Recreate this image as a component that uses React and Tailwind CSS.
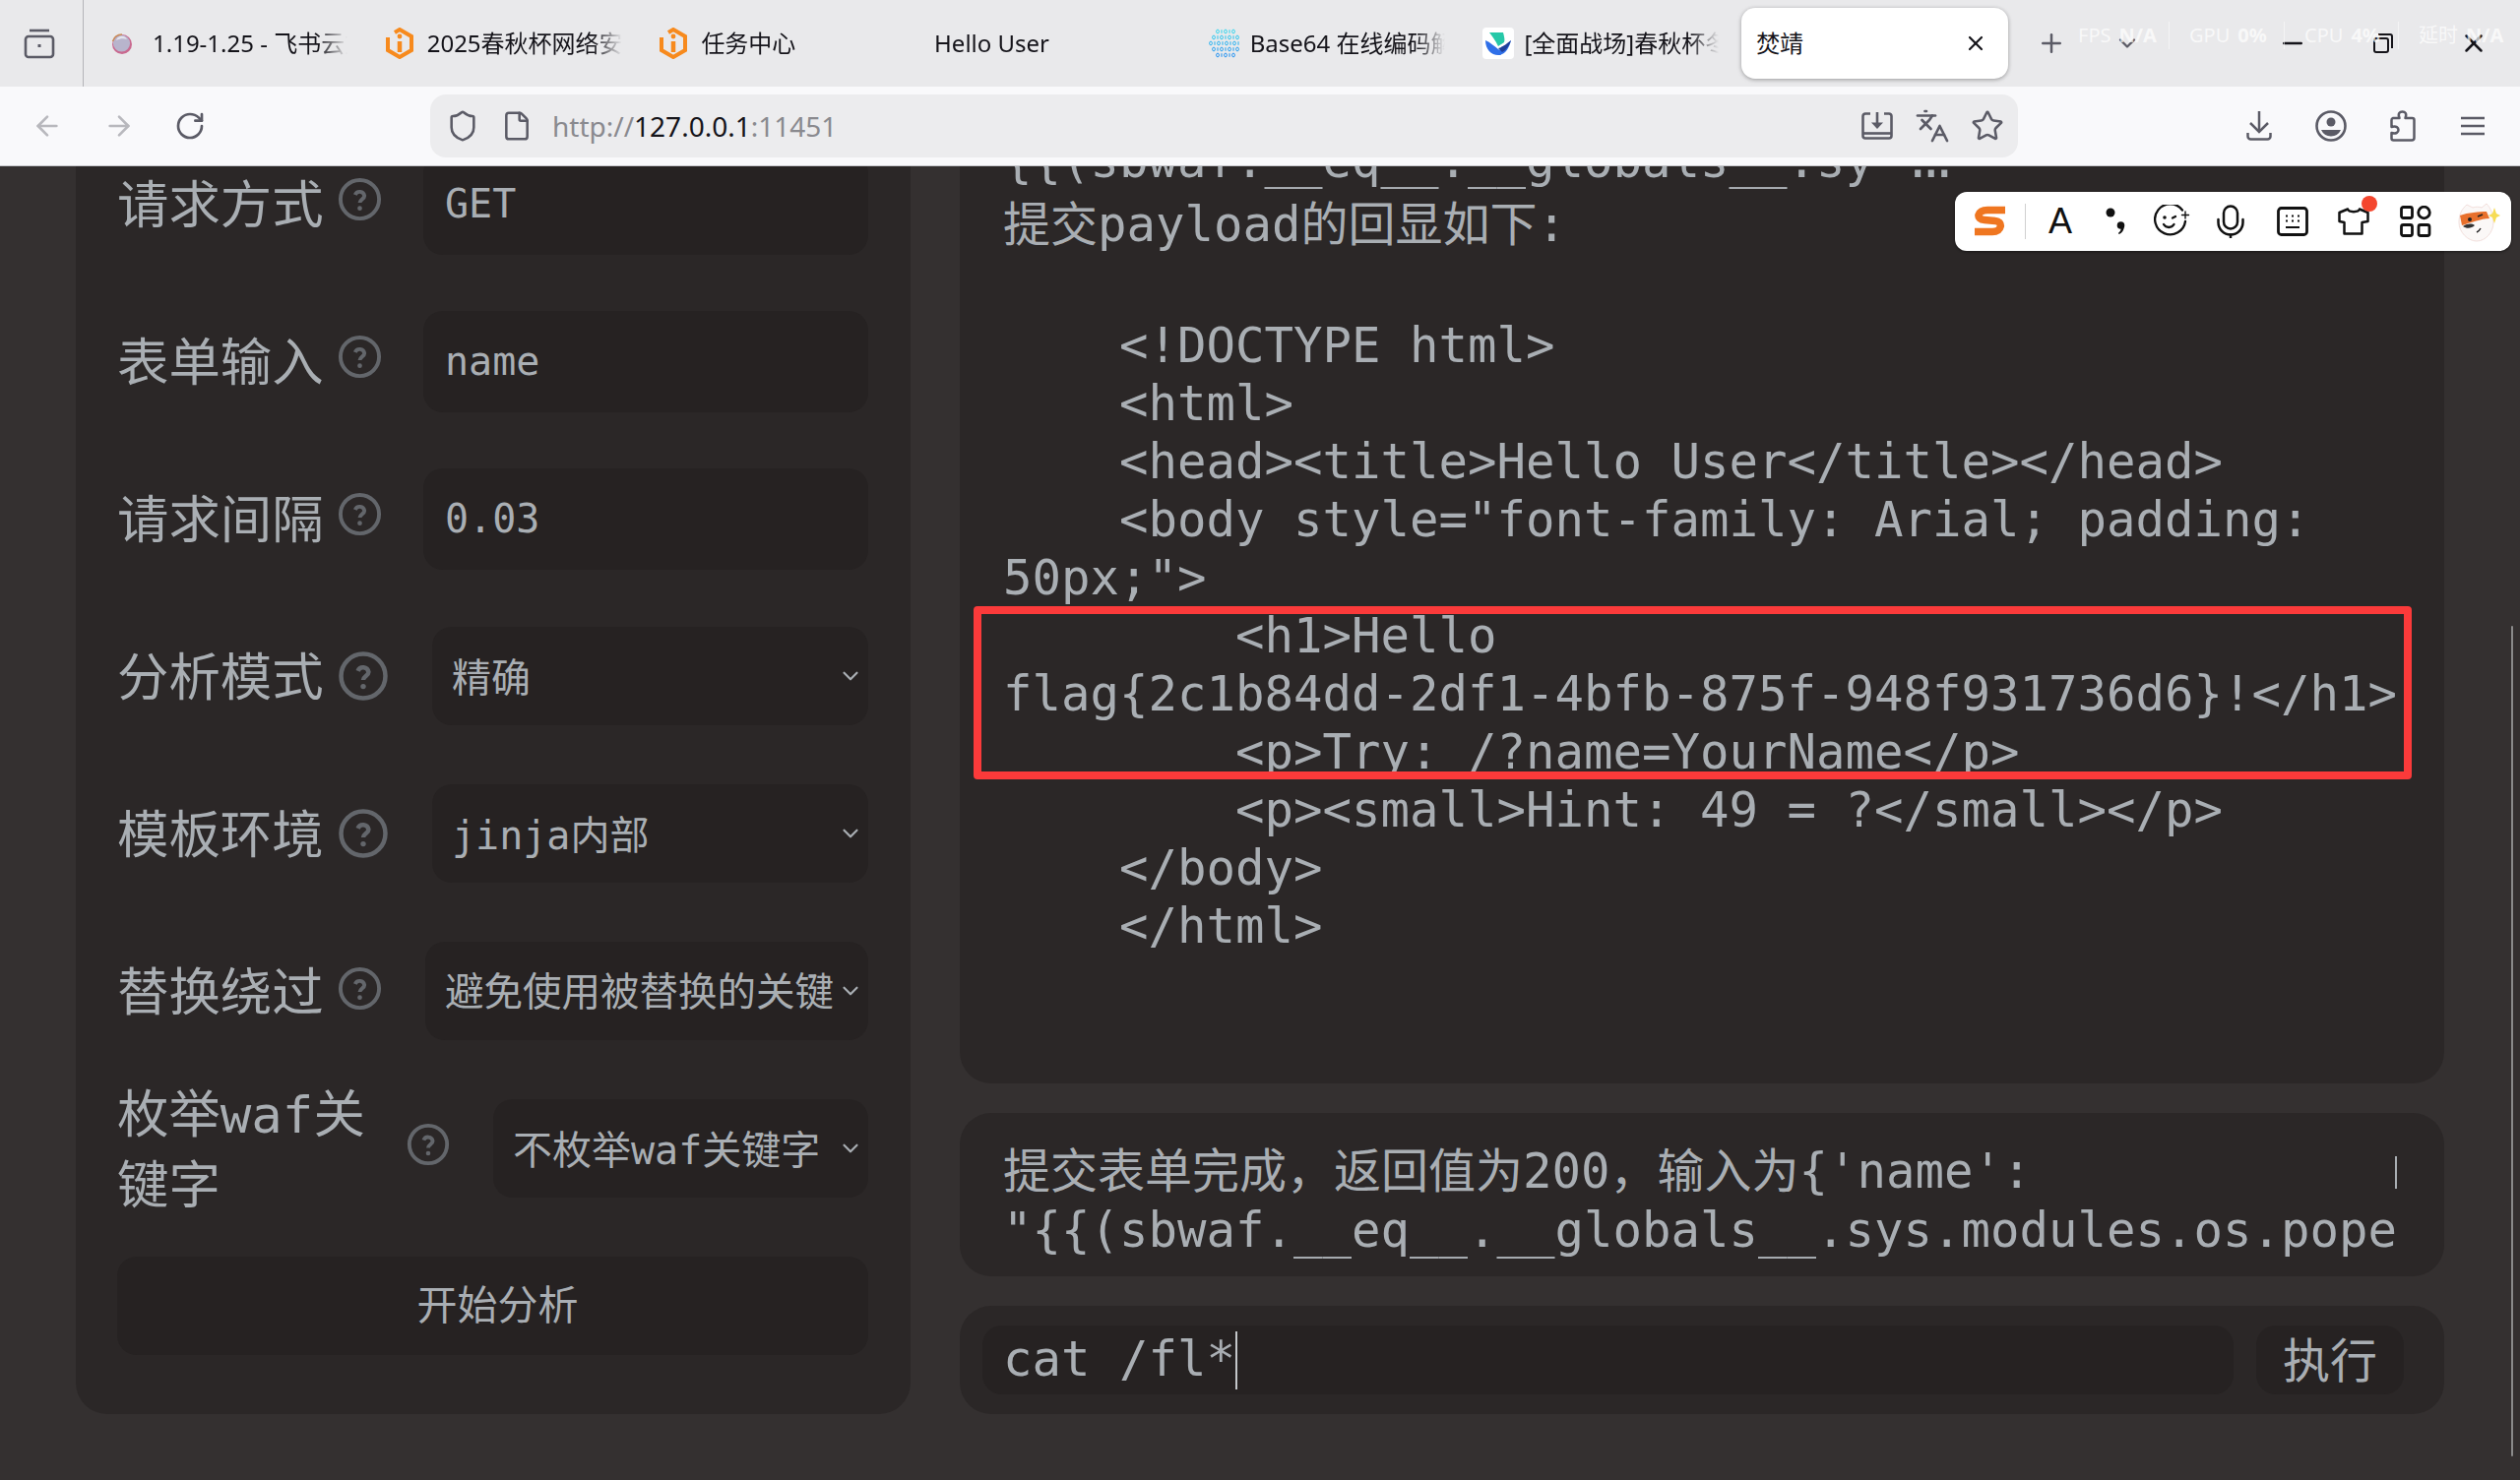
import React from "react";
import { ArrowLeft, ArrowRight, RotateCw, Shield, File, Languages, Star, Plus, ChevronDown, X, Minus } from "lucide-react";

const UI_FONT = "font-['Noto_Sans','Noto_Sans_CJK_SC',sans-serif]";
const MONO_FONT = "font-['DejaVu_Sans_Mono','Noto_Sans_CJK_SC',monospace]";

const tabs = [
  { title: "1.19-1.25 - 飞书云文档", icon: "feishu" },
  { title: "2025春秋杯网络安全联赛", icon: "ichunqiu" },
  { title: "任务中心", icon: "ichunqiu" },
  { title: "Hello User" },
  { title: "Base64 在线编码解码", icon: "base64" },
  { title: "[全面战场]春秋杯冬季赛", icon: "vshield" },
];

const Cjk = ({ children }) => <span className="text-[48px]">{children}</span>;

const outputLines = [
  <>
    {"{{(sbwaf.__eq__.__globals__.sy "}
    <span className="tracking-[-16px]">...</span>
  </>,
  <>
    <Cjk>提交</Cjk>payload<Cjk>的回显如下</Cjk>:
  </>,
  " ",
  "    <!DOCTYPE html>",
  "    <html>",
  "    <head><title>Hello User</title></head>",
  '    <body style="font-family: Arial; padding:',
  '50px;">',
  "        <h1>Hello",
  "flag{2c1b84dd-2df1-4bfb-875f-948f931736d6}!</h1>",
  "        <p>Try: /?name=YourName</p>",
  "        <p><small>Hint: 49 = ?</small></p>",
  "    </body>",
  "    </html>",
];

const base64Rows = [
  { y: 3, xs: [9, 13, 17, 21, 25], color: "#2bd4ee" },
  { y: 9, xs: [5, 9, 13, 17, 21, 25, 29], color: "#27c4ee" },
  { y: 15, xs: [2, 6, 10, 14, 18, 22, 26, 30], color: "#22b0f0" },
  { y: 21, xs: [5, 9, 13, 17, 21, 25, 29], color: "#1e9df0" },
  { y: 27, xs: [9, 13, 17, 21, 25], color: "#1b8ff0" },
];

const Favicon = ({ type }) => {
  if (type === "feishu") {
    return (
      <svg width="22" height="32" viewBox="0 0 22 32">
        <circle cx="11" cy="17" r="10" fill="#c9698f" />
        <circle cx="10.5" cy="16" r="8.6" fill="#b8b4cc" />
        <path d="M5 13a6 6 0 0 1 11-1c-3-1-7-1-11 1z" fill="#e4e4ee" />
        <path d="M1.5 14A10 10 0 0 1 11 7" fill="none" stroke="#c98a55" strokeWidth="1.4" />
      </svg>
    );
  }
  if (type === "ichunqiu") {
    return (
      <svg width="28" height="32" viewBox="0 0 28 32" fill="none" stroke="#f78a1d" strokeWidth="4">
        <path d="M9 5 14 2l12 7v14l-12 7-12-7V10" />
        <path d="M14 14v11" strokeWidth="4.5" />
        <circle cx="14" cy="9" r="2.4" fill="#f78a1d" stroke="none" />
      </svg>
    );
  }
  if (type === "base64") {
    return (
      <svg width="32" height="30" viewBox="0 0 32 30" fill="none" strokeWidth="0.9">
        {base64Rows.map((row) =>
          row.xs.map((x, i) =>
            i % 2 === 0 ? (
              <ellipse key={`${row.y}-${x}`} cx={x} cy={row.y} rx="1.4" ry="1.9" stroke={row.color} />
            ) : (
              <rect key={`${row.y}-${x}`} x={x - 0.5} y={row.y - 1.8} width="1" height="3.6" fill={row.color} />
            )
          )
        )}
      </svg>
    );
  }
  if (type === "vshield") {
    return (
      <svg width="32" height="32" viewBox="0 0 32 32">
        <rect width="32" height="32" rx="4" fill="#fff" />
        <path d="M7 5h14c1 4 2 7 1 10l-6 4C13 13 10 9 7 5z" fill="#26c8a8" />
        <path d="M3 13c5 2 9 6 13 9 3 2 6-1 13-9-2 8-6 15-13 15-7 0-13-6-13-15z" fill="#2f6fe8" />
        <path d="M16 21c4-1 8-4 13-8-2 6-5 10-9 12z" fill="#1f3f9a" />
      </svg>
    );
  }
  return null;
};

const TabGroupIcon = () => (
  <svg width="32" height="32" viewBox="0 0 32 32" fill="none" stroke="#5b5b66" strokeWidth="2.6">
    <path d="M6 3h20" />
    <rect x="2" y="9" width="28" height="21" rx="3" />
    <rect x="14.5" y="17" width="3" height="3" fill="#5b5b66" stroke="none" />
  </svg>
);

const SaveIcon = () => (
  <svg width="32" height="28" viewBox="0 0 32 28" fill="none" stroke="#5b5b66" strokeWidth="2.6">
    <path d="M9 1.5H4A2.5 2.5 0 0 0 1.5 4v20A2.5 2.5 0 0 0 4 26.5h24a2.5 2.5 0 0 0 2.5-2.5V4A2.5 2.5 0 0 0 28 1.5h-5" />
    <path d="M1.5 21.5h29" />
    <path d="M16 0v12" />
    <path d="M10 10.5h12l-6 6.5z" fill="#5b5b66" stroke="none" />
  </svg>
);

const DownloadIcon = () => (
  <svg width="26" height="30" viewBox="0 0 26 30" fill="none" stroke="#5b5b66" strokeWidth="2.5">
    <path d="M13 0v20" />
    <path d="M4 12l9 9 9-9" />
    <path d="M1.5 22v3.5a3 3 0 0 0 3 3h17a3 3 0 0 0 3-3V22" />
  </svg>
);

const AccountIcon = () => (
  <svg width="32" height="32" viewBox="0 0 32 32" fill="none">
    <circle cx="16" cy="16" r="14.5" stroke="#5b5b66" strokeWidth="2.6" />
    <circle cx="16" cy="12" r="4.5" fill="#5b5b66" />
    <path d="M6 20h20a11 11 0 0 1-20 0z" fill="#5b5b66" />
  </svg>
);

const PuzzleIcon = () => (
  <svg width="26" height="32" viewBox="0 0 26 32" fill="none" stroke="#5b5b66" strokeWidth="2.5" strokeLinejoin="round">
    <path d="M3 8h6.500C7.500 3 10 1.500 12.500 1.500S17.500 3 15.500 8h7a2 2 0 0 1 2 2v18a2.500 2.500 0 0 1-2.500 2.500H3.500A2 2 0 0 1 1.500 28.500V23c5 1.500 7-1 7-3s-2-4.500-7-3v-7a2 2 0 0 1 1.500-2z" />
  </svg>
);

const MenuIcon = () => (
  <svg width="24" height="20" viewBox="0 0 24 20" stroke="#5b5b66" strokeWidth="2.5">
    <path d="M0 2h24M0 10h24M0 18h24" />
  </svg>
);

const SogouLogo = () => (
  <svg width="36" height="32" viewBox="0 0 36 32" fill="none">
    <path d="M34 4.500H16C5 4.500 4 14 13 14.500l11 1c8 .5 7 11-3 11H3" stroke="#ef7620" strokeWidth="7.5" />
  </svg>
);

const PunctIcon = () => (
  <svg width="21" height="30" viewBox="0 0 21 30" fill="#111">
    <circle cx="5" cy="6" r="4.5" />
    <circle cx="15.5" cy="19" r="3.8" />
    <path d="M18.800 20c0 4-2 6.500-5 8l-1-1c2-1.500 3-3 3-6z" />
  </svg>
);

const ImeSmile = () => (
  <svg width="38" height="34" viewBox="0 0 38 34" fill="none" stroke="#111" strokeWidth="2.3" strokeLinecap="round">
    <path d="M29 5.500A15.500 15.500 0 1 0 32 17" />
    <circle cx="11" cy="13" r="1.8" fill="#111" stroke="none" />
    <path d="M19 13.500l3-1.500" />
    <path d="M10 20c2.500 4 8 4 10.500 0" />
    <path d="M32 7v7M28.500 10.500h7" strokeWidth="1.4" />
  </svg>
);

const ImeMic = () => (
  <svg width="28" height="34" viewBox="0 0 28 34" fill="none" stroke="#111" strokeWidth="2.5" strokeLinecap="round">
    <rect x="7" y="1.5" width="14" height="23" rx="7" />
    <path d="M1.500 15v3a12.500 12.500 0 0 0 25 0v-3" />
    <path d="M14 30.500V34" />
  </svg>
);

const KeyboardIcon = () => (
  <svg width="32" height="30" viewBox="0 0 32 30" fill="none" stroke="#111" strokeWidth="2.8">
    <rect x="1.5" y="1.5" width="29" height="27" rx="3" />
    <path d="M9 9.500h2M15 9.500h2M21 9.500h2M9 14.500h2M15 14.500h2M21 14.500h2" strokeWidth="2.2" />
    <path d="M9 21h14" strokeWidth="2" />
  </svg>
);

const ShirtIcon = () => (
  <svg width="32" height="28" viewBox="0 0 32 28" fill="none" stroke="#111" strokeWidth="2.5" strokeLinejoin="round">
    <path d="M10 1.500 1.500 5v9l5 1v11.500h18V15l6-1V5L22 1.500c-1 3.500-11 3.500-12 0z" />
  </svg>
);

const GridIcon = () => (
  <svg width="32" height="32" viewBox="0 0 32 32" fill="none" stroke="#111" strokeWidth="2.8">
    <rect x="1.5" y="1.5" width="11" height="11" rx="2" />
    <circle cx="24.5" cy="7" r="5.8" />
    <rect x="1.5" y="19.5" width="11" height="11" rx="2" />
    <rect x="19" y="19.5" width="11" height="11" rx="2" />
  </svg>
);

const Mascot = () => (
  <svg width="44" height="42" viewBox="0 0 44 42">
    <path d="M2 22c0-8 3-14 8-18l6 3c3-1 6-1 9 0l5-4c4 4 7 11 7 19 0 10-8 19-17 19S2 32 2 22z" fill="#fbf8f7" stroke="#f2dfdc" />
    <path d="M3 15c8-3 20-4 27-4l3 7c-8 0-21 5-28 7z" fill="#e8702c" />
    <circle cx="13" cy="19" r="2" fill="#222" />
    <path d="M21 16l5-2" stroke="#222" strokeWidth="1.8" />
    <path d="M6 26c5-3 9-3 12-1-3 3-8 4-12 1z" fill="#333" />
    <path d="M24 28c-1 2-2 3-4 4" stroke="#222" strokeWidth="1.4" fill="none" />
    <path d="M38 7l2 6 4 2-4 2-2 6-2-6-4-2 4-2z" fill="#f6dc55" />
  </svg>
);

const HelpIcon = ({ size, className }) => (
  <svg className={className} width={size} height={size} viewBox="0 0 24 24" fill="none" stroke="#63666b" strokeWidth="2">
    <circle cx="12" cy="12" r="10" />
    <path d="M9.600 9.700a2.500 2.500 0 0 1 4.800.500c0 1.700-2.400 1.900-2.400 3.600" strokeWidth="2" />
    <circle cx="12" cy="16.700" r="1.2" fill="#63666b" stroke="none" />
  </svg>
);

const Tab = ({ title, icon }) => (
  <div className="flex w-[278.7px] shrink-0 items-center pl-4">
    {icon && (
      <span className="mr-[10px] flex w-[32px] shrink-0 items-center">
        <Favicon type={icon} />
      </span>
    )}
    <span className="w-[198px] overflow-hidden whitespace-nowrap text-[24px] text-[#15141a] [mask-image:linear-gradient(to_right,black_85%,transparent)]">
      {title}
    </span>
  </div>
);

const Stat = ({ name, value, className }) => (
  <div className={`flex h-[28px] items-center gap-2 whitespace-nowrap text-[20px] text-white/70 ${className}`}>
    <span>{name}</span>
    <span className="font-bold">{value}</span>
  </div>
);

const BrowserChrome = () => (
  <div className={`${UI_FONT} relative z-10`}>
    {/* tab strip */}
    <div className="relative flex h-[88px] items-center bg-[#e9e9eb]">
      <div className="flex h-full w-[85px] shrink-0 items-center justify-center border-r border-[#b4b4b8] pr-[4px]">
        <TabGroupIcon />
      </div>
      <div className="ml-[12px] flex">
        {tabs.map((t) => (
          <Tab key={t.title} {...t} />
        ))}
      </div>
      <div className="flex h-[72px] w-[271px] shrink-0 items-center justify-between rounded-[14px] bg-white pl-[15px] pr-[21px] text-[24px] text-[#15141a] shadow-[0_1px_4px_rgba(0,0,0,0.35)]">
        <span>焚靖</span>
        <X size={24} strokeWidth={2.2} color="#15141a" />
      </div>
      <Plus className="ml-[29px]" size={30} strokeWidth={2} color="#5b5b66" />
      <ChevronDown className="ml-[48px]" size={28} strokeWidth={2} color="#5b5b66" />
      <Minus className="ml-[139px]" size={30} strokeWidth={2} color="#15141a" />
      <svg className="ml-[66px]" width="22" height="22" viewBox="0 0 22 22" fill="none" stroke="#15141a" strokeWidth="2">
        <rect x="2" y="6" width="14" height="14" rx="2" />
        <path d="M6 2h12a2 2 0 0 1 2 2v12" />
      </svg>
      <X className="ml-[66px]" size={30} strokeWidth={2} color="#15141a" />

      {/* perf overlay drawn by a desktop tool on top of the window */}
      <div className="absolute left-[2111px] top-[22px] flex">
        <Stat name="FPS" value="N/A" className="w-[93px] border-r border-white/50" />
        <Stat name="GPU" value="0%" className="w-[117px] border-r border-white/50 pl-[20px]" />
        <Stat name="CPU" value="4%" className="w-[116px] border-r border-white/50 pl-[20px]" />
        <Stat name="延时" value="N/A" className="pl-[20px]" />
      </div>
    </div>

    {/* nav bar */}
    <div className="flex h-[81px] items-center border-b border-[#c8c8cc] bg-[#f9f9fb]">
      <ArrowLeft className="ml-[32px]" size={32} strokeWidth={2} color="#b8b8bd" />
      <ArrowRight className="ml-[41px]" size={32} strokeWidth={2} color="#b8b8bd" />
      <RotateCw className="ml-[40px]" size={32} strokeWidth={2} color="#5b5b66" />
      <div className="ml-[228px] flex h-[64px] w-[1613px] items-center rounded-[16px] bg-[#ececee]">
        <Shield className="ml-[16px]" size={34} strokeWidth={1.8} color="#5b5b66" />
        <File className="ml-[22px]" size={32} strokeWidth={1.9} color="#5b5b66" />
        <span className="ml-[20px] text-[28px] text-[#8a8a8f]">
          http://<span className="text-[#15141a]">127.0.0.1</span>:11451
        </span>
        <div className="ml-auto mr-[14px] flex items-center">
          <SaveIcon />
          <Languages className="ml-[22px]" size={36} strokeWidth={1.8} color="#5b5b66" />
          <Star className="ml-[21px]" size={34} strokeWidth={1.8} color="#5b5b66" />
        </div>
      </div>
      <div className="ml-[232px] flex items-center">
        <DownloadIcon />
        <span className="ml-[44px] flex"><AccountIcon /></span>
        <span className="ml-[44px] flex"><PuzzleIcon /></span>
        <span className="ml-[46px] flex"><MenuIcon /></span>
      </div>
    </div>
  </div>
);

const Row = ({ label, labelWidth = "w-[210px]", helpSize = 47, helpClass = "ml-[13px] mb-[9px]", children }) => (
  <div className="flex h-[100px] items-center">
    <div className={`${labelWidth} shrink-0 pt-[4px] text-[52.4px] leading-[72px] text-[#a9aeb3]`}>{label}</div>
    <HelpIcon size={helpSize} className={`${helpClass} shrink-0`} />
    {children}
  </div>
);

const TextField = ({ value }) => (
  <div className="ml-[41px] flex h-[103px] min-w-0 flex-1 items-center rounded-[20px] bg-[#262222] pl-[22px] text-[40px] text-[#a9aeb3]">
    {value}
  </div>
);

const SelectField = ({ value, textSize = "text-[40px]" }) => (
  <div className={`ml-[43px] flex h-[100px] min-w-0 flex-1 items-center rounded-[20px] bg-[#262222] pl-[20px] pr-[5px] ${textSize} text-[#a9aeb3]`}>
    <span className="mr-[4px] min-w-0 flex-1 overflow-hidden whitespace-nowrap pt-[3px]">{value}</span>
    <ChevronDown className="shrink-0" size={26} strokeWidth={2} color="#a9aeb3" />
  </div>
);

const ConfigPanel = () => (
  <div className="flex w-[848px] shrink-0 flex-col gap-[60px] rounded-[32px] bg-[#2b2727] pb-[60px] pl-[42px] pr-[43px] pt-[60px]">
    <Row label="请求方式"><TextField value="GET" /></Row>
    <Row label="表单输入"><TextField value="name" /></Row>
    <Row label="请求间隔"><TextField value="0.03" /></Row>
    <Row label="分析模式" helpSize={54} helpClass="ml-[13px]"><SelectField value="精确" /></Row>
    <Row label="模板环境" helpSize={54} helpClass="ml-[13px]"><SelectField value="jinja内部" /></Row>
    <Row label="替换绕过" helpClass="ml-[13px] mb-[6px]"><SelectField value="避免使用被替换的关键字" textSize="text-[39.5px]" /></Row>
    <Row label="枚举waf关键字" labelWidth="w-[252px]" helpSize={46} helpClass="ml-[41px] mb-[9px]">
      <SelectField value="不枚举waf关键字" />
    </Row>
    <button className="h-[100px] rounded-[20px] bg-[#262222] pl-[10px] pt-[2px] text-[41px] text-[#a9aeb3]">开始分析</button>
  </div>
);

const OutputPanel = () => (
  <div className="flex h-[1000px] shrink-0 flex-col justify-end overflow-hidden rounded-[32px] bg-[#2b2727] pb-[130px] pl-[44px] text-[49px] leading-[59px] text-[#a9aeb3]">
    {outputLines.map((line, i) => (
      <div key={i} className={`whitespace-pre ${i === 0 ? "mb-[6px]" : i === 2 ? "h-[64px]" : ""}`}>
        {line}
      </div>
    ))}
  </div>
);

const LogPanel = () => (
  <div className="relative h-[166px] shrink-0 overflow-hidden rounded-[32px] bg-[#2b2727] pl-[44px] pr-[48px] pt-[29px] text-[49px] leading-[60px] text-[#a9aeb3]">
    <div className="overflow-hidden whitespace-pre">
      <Cjk>提交表单完成，返回值为</Cjk>200<Cjk>，输入为</Cjk>{"{'name':"}
      {"\n"}
      {'"{{(sbwaf.__eq__.__globals__.sys.modules.os.popen'}
    </div>
    <div className="absolute left-[1458px] top-[44px] h-[33px] w-[2px] bg-[#a9aeb3]" />
  </div>
);

const CommandPanel = () => (
  <div className="flex h-[110px] shrink-0 items-center gap-[23px] rounded-[32px] bg-[#2b2727] pl-[23px] pr-[41px] text-[#a9aeb3]">
    <div className="flex h-[70px] flex-1 items-center rounded-[20px] bg-[#262222] pl-[21px] text-[49px]">
      <span>cat /fl*</span>
      <span className="h-[59px] w-[2px] bg-[#c4c7ca]" />
    </div>
    <button className="h-[70px] w-[150px] rounded-[20px] bg-[#262222] text-[48px]">执行</button>
  </div>
);

const ImeToolbar = () => (
  <div className="absolute left-[1986px] top-[195px] z-20 flex h-[60px] w-[565px] items-center rounded-[12px] bg-white shadow-[0_1px_3px_rgba(0,0,0,0.45)]">
    <span className="ml-[17px] flex"><SogouLogo /></span>
    <span className="ml-[18px] h-[36px] w-px bg-[#d0d0d0]" />
    <span className="ml-[23px] w-[25px] font-['Liberation_Sans',sans-serif] text-[36px] leading-none text-[#111]">A</span>
    <span className="ml-[33px] flex"><PunctIcon /></span>
    <span className="ml-[28px] flex"><ImeSmile /></span>
    <span className="ml-[26px] flex"><ImeMic /></span>
    <span className="ml-[33px] flex"><KeyboardIcon /></span>
    <span className="relative ml-[30px] flex">
      <ShirtIcon />
      <span className="absolute right-[-8px] top-[-12px] h-[16px] w-[16px] rounded-full bg-[#f4462e]" />
    </span>
    <span className="ml-[31px] flex"><GridIcon /></span>
    <span className="ml-[26px] flex"><Mascot /></span>
  </div>
);

export default function App() {
  return (
    <div className="relative h-[1504px] w-[2560px] overflow-hidden bg-[#343030]">
      <BrowserChrome />
      <ImeToolbar />

      <main className={`${MONO_FONT} relative flex h-[1335px] items-end gap-[50px] overflow-hidden pb-[67px] pl-[77px] pr-[77px]`}>
        <ConfigPanel />
        <div className="flex min-w-0 flex-1 flex-col gap-[30px]">
          <OutputPanel />
          <LogPanel />
          <CommandPanel />
        </div>
        {/* page scrollbar */}
        <div className="absolute right-[7px] top-[467px] h-[844px] w-[2px] rounded-full bg-[#8a8a8a]" />
        {/* red box someone drew over the screenshot */}
        <div className="absolute left-[989px] top-[447px] h-[176px] w-[1461px] rounded-[4px] border-[8px] border-[#fb3a3a]" />
      </main>
    </div>
  );
}
